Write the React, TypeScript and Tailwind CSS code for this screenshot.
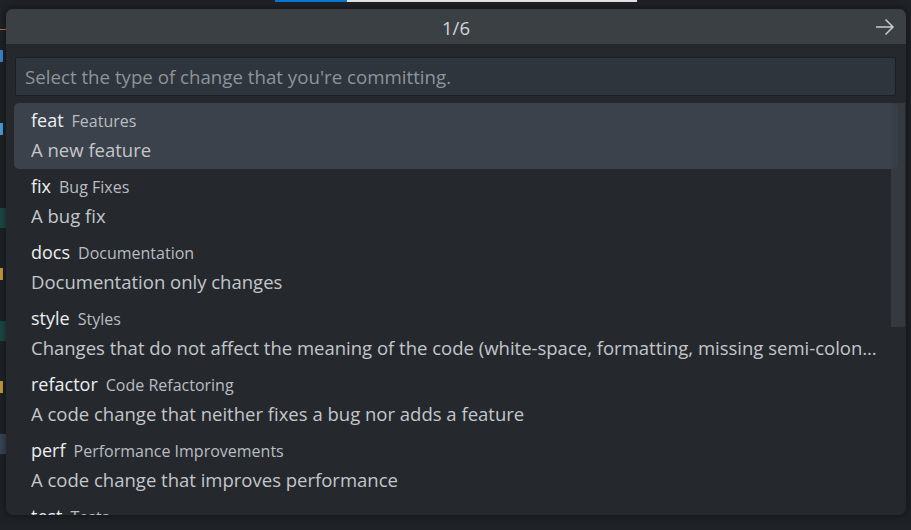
import React from 'react';

const items = [
  { type: 'feat', title: 'Features', desc: 'A new feature' },
  { type: 'fix', title: 'Bug Fixes', desc: 'A bug fix' },
  { type: 'docs', title: 'Documentation', desc: 'Documentation only changes' },
  { type: 'style', title: 'Styles', desc: 'Changes that do not affect the meaning of the code (white-space, formatting, missing semi-colons, etc)' },
  { type: 'refactor', title: 'Code Refactoring', desc: 'A code change that neither fixes a bug nor adds a feature' },
  { type: 'perf', title: 'Performance Improvements', desc: 'A code change that improves performance' },
  { type: 'test', title: 'Tests', desc: 'Adding missing tests or correcting existing tests' },
];

// bits of the editor that peek out at the left edge
const gutter = [
  { h: 'h-[20px]', w: 'w-[6px]', c: 'bg-transparent' },
  { h: 'h-[1px]', w: 'w-[6px]', c: 'bg-[#c4705a]' },
  { h: 'h-[20px]', w: 'w-[6px]', c: 'bg-transparent' },
  { h: 'h-[12px]', w: 'w-[3px]', c: 'bg-[#3a87d0]' },
  { h: 'h-[61px]', w: 'w-[6px]', c: 'bg-transparent' },
  { h: 'h-[12px]', w: 'w-[3px]', c: 'bg-[#4a9fe0]' },
  { h: 'h-[73px]', w: 'w-[6px]', c: 'bg-transparent' },
  { h: 'h-[20px]', w: 'w-[6px]', c: 'bg-[#1e4744]' },
  { h: 'h-[40px]', w: 'w-[6px]', c: 'bg-transparent' },
  { h: 'h-[12px]', w: 'w-[3px]', c: 'bg-[#c99a3c]' },
  { h: 'h-[41px]', w: 'w-[6px]', c: 'bg-transparent' },
  { h: 'h-[20px]', w: 'w-[6px]', c: 'bg-[#1e4744]' },
  { h: 'h-[40px]', w: 'w-[6px]', c: 'bg-transparent' },
  { h: 'h-[12px]', w: 'w-[3px]', c: 'bg-[#c99a3c]' },
  { h: 'h-[41px]', w: 'w-[6px]', c: 'bg-transparent' },
  { h: 'h-[20px]', w: 'w-[6px]', c: 'bg-[#3a4656]' },
];

const font = { fontFamily: '"Open Sans", "Noto Sans", sans-serif' };

export default function App() {
  return (
    <div className="relative w-[911px] h-[530px] overflow-hidden bg-[#1f2226]" style={font}>
      {/* editor behind the picker */}
      <div className="flex flex-col">
        <div className="h-[9px] pl-[275px]">
          <div className="w-[362px] h-[2px] bg-[#e4e4e4]">
            <div className="w-[72px] h-full bg-[#0a78d4]" />
          </div>
        </div>
        <div className="flex flex-col">
          {gutter.map((g, i) => (
            <div key={i} className={`${g.h} ${g.w} ${g.c} shrink-0`} />
          ))}
        </div>
      </div>

      {/* quick pick overlay */}
      <div className="absolute left-[6px] top-[9px] w-[900px] h-[506px] rounded-[7px] bg-[#25292e] overflow-hidden shadow-[0_0_8px_rgba(0,0,0,0.5)] flex flex-col">
        <div className="h-[35px] pt-[2px] bg-[#3b4045] flex items-center justify-center relative shrink-0">
          <span className="text-[18.5px] text-[#d2d5d8]">1/6</span>
          <svg className="absolute right-[11px] top-[9px]" width="20" height="18" viewBox="0 0 20 18" fill="none" stroke="#c8cbce" strokeWidth="1.5">
            <path d="M1 9h17M10.5 1.5 18 9l-7.5 7.5" />
          </svg>
        </div>

        <div className="mt-[13px] ml-[9px] mr-[10px] h-[39px] pt-[2px] bg-[#2f353c] border border-[#1b1e22] rounded-[2px] flex items-center px-[9px] shrink-0">
          <span className="text-[18.7px] text-[#8d949b]">Select the type of change that you're committing.</span>
        </div>

        <div className="relative mt-[7px] flex-1 overflow-hidden">
          <div className="flex flex-col px-[8px]">
            {items.map((it, i) => (
              <div
                key={it.type}
                className={`h-[66px] shrink-0 rounded-[5px] pl-[17px] pr-[14px] pb-[2px] flex flex-col justify-center ${i === 0 ? 'bg-[#3b424b]' : ''}`}
              >
                <div className="flex items-baseline gap-[8px] h-[30px] leading-[30px]">
                  <span className="text-[18px] text-[#eceef0]">{it.type}</span>
                  <span className="text-[16px] text-[#b9bdc2]">{it.title}</span>
                </div>
                <div className="text-[18.5px] leading-[30px] h-[30px] text-[#c3c6ca] whitespace-nowrap overflow-hidden text-ellipsis">
                  {it.desc}
                </div>
              </div>
            ))}
          </div>
          <div className="absolute right-[1px] top-0 w-[14px] h-[224px] bg-[#3a3f46]/80" />
        </div>
      </div>
    </div>
  );
}
